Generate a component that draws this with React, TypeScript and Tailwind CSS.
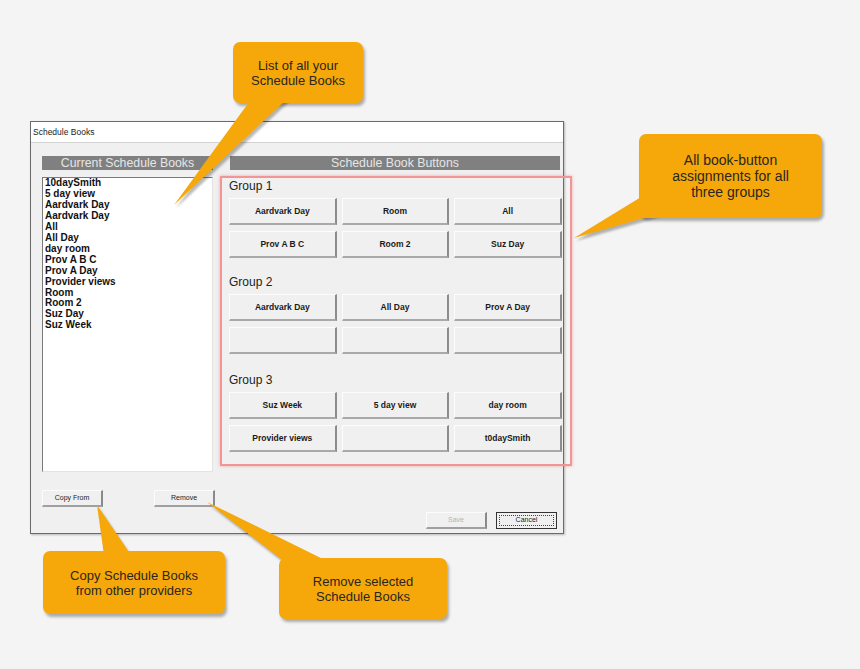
import React from "react";

const books = [
  "10daySmith",
  "5 day view",
  "Aardvark Day",
  "Aardvark Day",
  "All",
  "All Day",
  "day room",
  "Prov A B C",
  "Prov A Day",
  "Provider views",
  "Room",
  "Room 2",
  "Suz Day",
  "Suz Week",
];

const groups = [
  { title: "Group 1", gap: "mt-[9px]", buttons: ["Aardvark Day", "Room", "All", "Prov A B C", "Room 2", "Suz Day"] },
  { title: "Group 2", gap: "mt-[17px]", buttons: ["Aardvark Day", "All Day", "Prov A Day", "", "", ""] },
  { title: "Group 3", gap: "mt-[19px]", buttons: ["Suz Week", "5 day view", "day room", "Provider views", "", "t0daySmith"] },
];

const callouts = [
  { text: ["List of all your", "Schedule Books"], box: "left-[233px] top-[42px] w-[130px] h-[61px] text-[13px] leading-[15px]" },
  { text: ["All book-button", "assignments for all", "three groups"], box: "left-[639px] top-[134px] w-[183px] h-[84px] text-[14px] leading-[16px]" },
  { text: ["Copy Schedule Books", "from other providers"], box: "left-[43px] top-[551px] w-[182px] h-[63px] text-[13px] leading-[15px]" },
  { text: ["Remove selected", "Schedule Books"], box: "left-[279px] top-[558px] w-[168px] h-[61px] text-[13px] leading-[15px]" },
];

const pointers = [
  "252,98 288,98 174,205",
  "646,194 658,214 574,238",
  "104,555 131,555 97,505",
  "286,563 331,563 207,502",
];

function WinButton({ label }: { label: string }) {
  return (
    <div className="h-[27px] flex items-center justify-center bg-[#f0f0f0] border-t border-l border-[#fcfcfc] border-b-2 border-b-[#a9a9a9] border-r-2 border-r-[#8c8c8c] text-[8.5px] font-bold text-[#1a1a1a]">
      {label}
    </div>
  );
}

function SmallButton({ label, disabled }: { label: string; disabled?: boolean }) {
  return (
    <div
      className={
        "w-[61px] h-[17px] flex items-center justify-center bg-[#f0f0f0] border-t border-l border-[#fcfcfc] border-b-2 border-b-[#a0a0a0] border-r-2 border-r-[#8a8a8a] text-[7px] " +
        (disabled ? "text-[#b5b5b5]" : "text-[#222]")
      }
    >
      {label}
    </div>
  );
}

export default function App() {
  return (
    <div
      className="relative w-[860px] h-[669px] overflow-hidden bg-[#f4f4f4]"
      style={{ fontFamily: '"Liberation Sans", Arial, sans-serif' }}
    >
      {/* Dialog window */}
      <div className="absolute left-[30px] top-[121px] w-[534px] h-[413px] flex flex-col border border-[#6a6a6a] bg-[#f0f0f0] shadow-[1px_1px_2px_rgba(0,0,0,0.25)]">
        <div className="h-[21px] shrink-0 bg-white border-b border-[#d2d2d2] flex items-center pl-[2px] text-[8.5px] text-[#222]">
          Schedule Books
        </div>

        <div className="flex pl-[11px] pt-[13px]">
          {/* Left column */}
          <div className="w-[171px] flex flex-col">
            <div className="h-[14px] bg-[#808080] text-[#e6e6e6] text-[12.3px] leading-[14px] text-center">
              Current Schedule Books
            </div>
            <div className="mt-[7px] h-[295px] bg-white border-t border-l border-[#7a7a7a] border-r border-b border-r-[#e3e3e3] border-b-[#e3e3e3] pl-[2px] text-[10px] font-bold leading-[10.95px] text-[#111]">
              {books.map((b, i) => (
                <div key={i}>{b}</div>
              ))}
            </div>
            <div className="mt-[18px] w-[173px] flex justify-between">
              <SmallButton label="Copy From" />
              <SmallButton label="Remove" />
            </div>
          </div>

          {/* Right column */}
          <div className="ml-[17px] w-[330px] flex flex-col">
            <div className="h-[14px] bg-[#808080] text-[#e6e6e6] text-[12.3px] leading-[14px] text-center">
              Schedule Book Buttons
            </div>
            {groups.map((g) => (
              <div key={g.title} className={g.gap}>
                <div className="h-[14px] leading-[14px] text-[12px] text-[#222] -ml-px">{g.title}</div>
                <div className="mt-[5px] -ml-px w-[333px] grid grid-cols-3 gap-x-[5px] gap-y-[6px]">
                  {g.buttons.map((b, i) => (
                    <WinButton key={i} label={b} />
                  ))}
                </div>
              </div>
            ))}
          </div>
        </div>

        <div className="mt-[5px] flex justify-end gap-[9px] pr-[6px]">
          <SmallButton label="Save" disabled />
          <div className="w-[61px] h-[17px] border border-[#333] bg-[#f0f0f0] p-[2px]">
            <div className="w-full h-full border border-dotted border-[#444] flex items-center justify-center text-[7px] text-[#222]">
              Cancel
            </div>
          </div>
        </div>
      </div>

      {/* Highlight around the button groups */}
      <div className="absolute left-[220px] top-[176px] w-[352px] h-[290px] border-2 border-[#f29595] shadow-[0_0_3px_rgba(235,110,110,0.55)] pointer-events-none" />

      {/* Pointer shadows */}
      <svg className="absolute inset-0 pointer-events-none" width="860" height="669">
        <defs>
          <filter id="blur" x="-20%" y="-20%" width="140%" height="140%">
            <feGaussianBlur stdDeviation="1.2" />
          </filter>
        </defs>
        <g transform="translate(2,3)" filter="url(#blur)" fill="rgba(0,0,0,0.28)">
          {pointers.map((p) => (
            <polygon key={p} points={p} />
          ))}
        </g>
      </svg>

      {/* Callout boxes */}
      {callouts.map((c, i) => (
        <div
          key={i}
          className={
            "absolute flex flex-col items-center justify-center text-center rounded-[7px] bg-[#f6a80b] text-[#2a261e] shadow-[2px_3px_3px_rgba(0,0,0,0.3)] " +
            c.box
          }
        >
          {c.text.map((t) => (
            <div key={t}>{t}</div>
          ))}
        </div>
      ))}

      {/* Pointers */}
      <svg className="absolute inset-0 pointer-events-none" width="860" height="669">
        <g fill="#f6a80b">
          {pointers.map((p) => (
            <polygon key={p} points={p} />
          ))}
        </g>
      </svg>
    </div>
  );
}
